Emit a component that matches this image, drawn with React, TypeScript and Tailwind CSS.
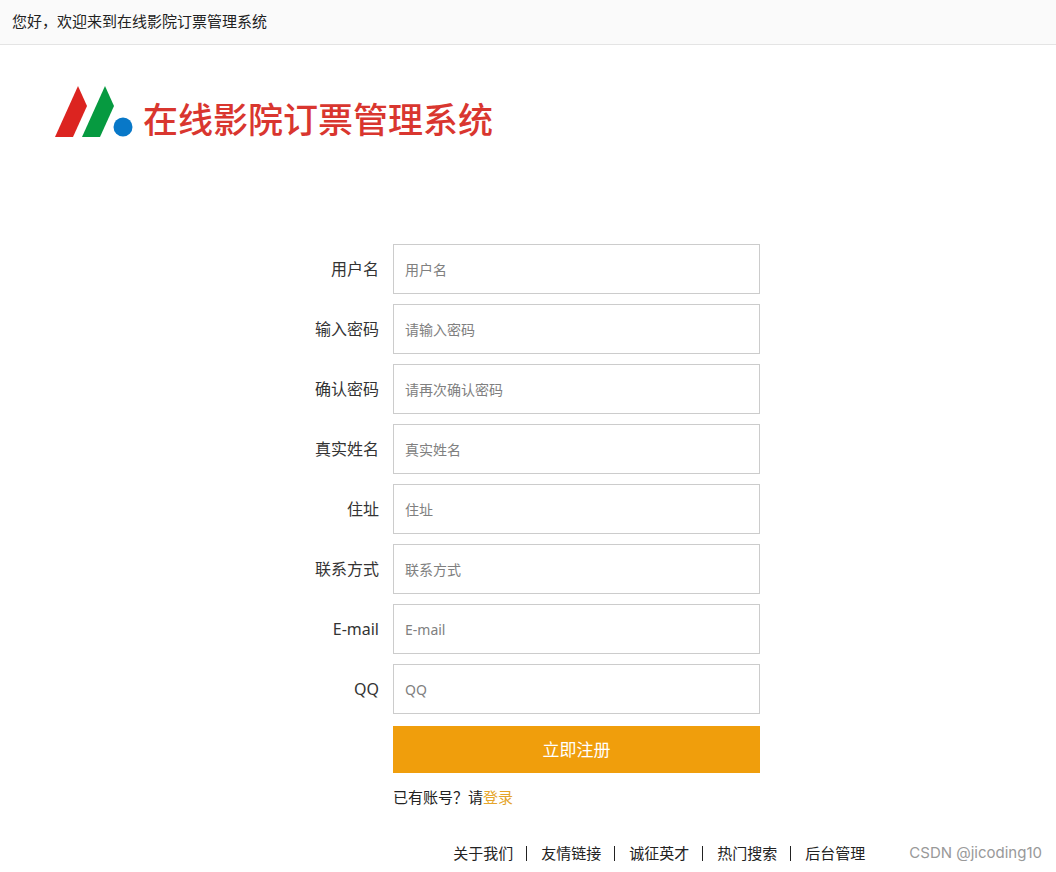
// ── RegisterPage ─────────────────────────────────────────────────────────────
// Top greeting bar, brand header, registration form, footer links

import { Fragment } from 'react'

interface Field {
  id: string
  label: string
  placeholder: string
  type: string
}

const FIELDS: Field[] = [
  { id: 'username', label: '用户名', placeholder: '用户名', type: 'text' },
  { id: 'password', label: '输入密码', placeholder: '请输入密码', type: 'password' },
  { id: 'confirm', label: '确认密码', placeholder: '请再次确认密码', type: 'password' },
  { id: 'realname', label: '真实姓名', placeholder: '真实姓名', type: 'text' },
  { id: 'address', label: '住址', placeholder: '住址', type: 'text' },
  { id: 'phone', label: '联系方式', placeholder: '联系方式', type: 'tel' },
  { id: 'email', label: 'E-mail', placeholder: 'E-mail', type: 'email' },
  { id: 'qq', label: 'QQ', placeholder: 'QQ', type: 'text' },
]

const LINKS = ['关于我们', '友情链接', '诚征英才', '热门搜索', '后台管理']

function Logo() {
  return (
    <svg width="78" height="52" viewBox="0 0 78 52" aria-hidden="true">
      <path d="M23 0 L32 20 L18 51 H0 Z" fill="#dc2420" />
      <path d="M50 0 L59 20 L45 51 H27 Z" fill="#069a40" />
      <circle cx="68" cy="41" r="9.5" fill="#0878c8" />
    </svg>
  )
}

export default function App() {
  return (
    <div className="min-h-screen bg-white font-['Noto_Sans','Noto_Sans_CJK_SC',sans-serif] text-[15px] text-[#222]">
      {/* ── Greeting bar ── */}
      <div className="h-[45px] border-b border-[#e4e4e4] bg-[#fafafa] px-3 leading-[42px]">
        您好，欢迎来到在线影院订票管理系统
      </div>

      {/* ── Brand ── */}
      <header className="flex items-end gap-2.5 px-[55px] pt-[41px]">
        <Logo />
        <h1 className="text-[35px] leading-9 font-medium text-[#d9362f]">在线影院订票管理系统</h1>
      </header>

      {/* ── Form ── */}
      <main className="mx-auto mt-[106px] w-full max-w-[464px]">
        <form className="flex flex-col gap-2.5" onSubmit={(e) => e.preventDefault()}>
          {FIELDS.map(({ id, label, placeholder, type }) => (
            <div key={id} className="flex items-center gap-3.5">
              <label htmlFor={id} className="w-[83px] text-right text-base text-[#333]">
                {label}
              </label>
              <input
                id={id}
                type={type}
                placeholder={placeholder}
                className="h-[50px] min-w-0 flex-1 border border-[#ccc] px-[11px] text-sm outline-none placeholder:text-[#808080]"
              />
            </div>
          ))}
          <button
            type="submit"
            className="mt-0.5 ml-[97px] h-[47px] cursor-pointer bg-[#f09e0c] text-[17px] text-white"
          >
            立即注册
          </button>
        </form>
        <p className="mt-3 ml-[97px] leading-6">
          已有账号？请
          <a href="#login" className="text-[#e5a52a]">登录</a>
        </p>
      </main>

      {/* ── Footer ── */}
      <footer className="mt-8 flex items-center justify-end pr-3.5 leading-6">
        <nav className="flex items-center">
          {LINKS.map((link, i) => (
            <Fragment key={link}>
              {i > 0 && <span className="mr-3.5 ml-[13px] h-[15px] w-px bg-[#222]" />}
              <a href="#footer">{link}</a>
            </Fragment>
          ))}
        </nav>
        <span className="ml-11 font-['Inter',sans-serif] text-[#999]">CSDN @jicoding10</span>
      </footer>
    </div>
  )
}
